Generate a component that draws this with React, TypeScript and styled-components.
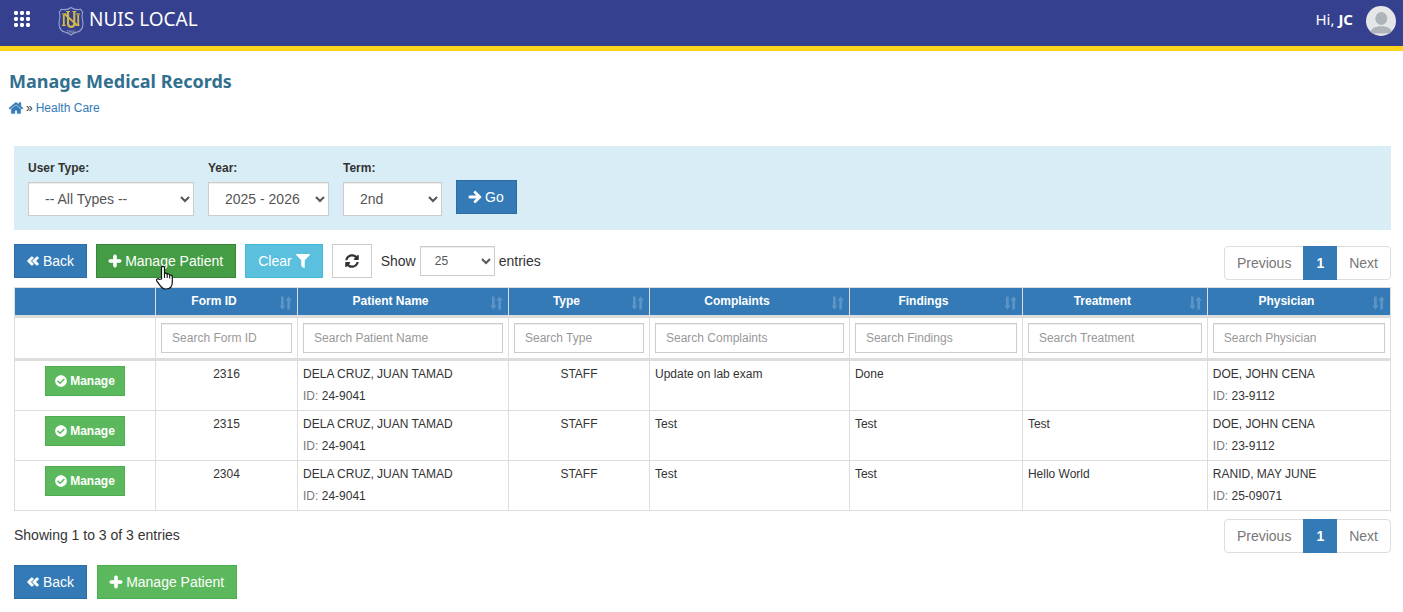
import React from "react";
import styled, { createGlobalStyle, css } from "styled-components";
import {
  FaAngleDoubleLeft,
  FaArrowRight,
  FaCheckCircle,
  FaFilter,
  FaHome,
  FaPlus,
  FaSyncAlt,
} from "react-icons/fa";

const GlobalStyle = createGlobalStyle`
  *, *::before, *::after { box-sizing: border-box; }
  body {
    margin: 0;
    background: #fff;
    color: #333;
    font-family: "Liberation Sans", Arial, sans-serif;
    font-size: 14px;
    line-height: 20px;
  }
  button, input, select { font-family: inherit; margin: 0; }
  a { text-decoration: none; }
`;

const displayFont = `"Noto Sans", "Open Sans", sans-serif`;

const TopBar = styled.header`
  display: flex;
  align-items: center;
  height: 51px;
  padding: 0 7px 4px 14px;
  background: #35408e;
  border-bottom: 5px solid #ffd41c;
  color: #fff;
  font-family: ${displayFont};
`;

const MenuButton = styled.button`
  display: flex;
  padding: 0 0 4px;
  border: 0;
  background: none;
  color: #fff;
  cursor: pointer;
`;

const BarText = styled.span`
  padding-bottom: 4px;
`;

const Brand = styled.a`
  display: flex;
  align-items: center;
  gap: 5px;
  margin-left: 28px;
  color: #fff;
  font-size: 19px;
  line-height: 24px;
`;

const UserLink = styled.a`
  display: flex;
  align-items: center;
  gap: 13px;
  margin-left: auto;
  color: #fff;
  font-size: 15px;
  line-height: 20px;
`;

const Main = styled.main`
  padding: 17px 12px 13px 14px;
`;

const PageHead = styled.div`
  margin: 0 0 26px -5px;
`;

const PageTitle = styled.h1`
  margin: 0;
  color: #31708f;
  font-family: ${displayFont};
  font-size: 18px;
  font-weight: 700;
  line-height: 26px;
`;

const Breadcrumb = styled.nav`
  display: flex;
  align-items: center;
  gap: 3px;
  height: 24px;
  margin-top: 2px;
  font-size: 12px;
  a { display: flex; color: #337ab7; }
  svg { overflow: visible; stroke-width: 20px; }
`;

const FilterPanel = styled.form`
  display: flex;
  align-items: flex-end;
  gap: 14px;
  padding: 14px;
  background: #d9edf7;
`;

const Field = styled.div<{ $width: number }>`
  display: flex;
  flex-direction: column;
  gap: 6px;
  width: ${(p) => p.$width}px;
  label { font-size: 12px; font-weight: 700; line-height: 16px; }
`;

const Select = styled.select<{ $small?: boolean }>`
  width: 100%;
  height: ${(p) => (p.$small ? 30 : 34)}px;
  padding: ${(p) => (p.$small ? "5px 10px" : "6px 12px")};
  border: 1px solid #ccc;
  border-radius: 0;
  background: #fff;
  box-shadow: inset 0 1px 1px rgba(0, 0, 0, 0.075);
  color: #555;
  font-size: ${(p) => (p.$small ? 12 : 14)}px;
`;

type Tone = "primary" | "success" | "successActive" | "info" | "plain";

const tones: Record<Tone, [string, string, string]> = {
  primary: ["#337ab7", "#2e6da4", "#fff"],
  success: ["#5cb85c", "#4cae4c", "#fff"],
  successActive: ["#449d44", "#398439", "#fff"],
  info: ["#5bc0de", "#46b8da", "#fff"],
  plain: ["#fff", "#ccc", "#333"],
};

const Button = styled.button<{ $tone: Tone; $small?: boolean }>`
  position: relative;
  display: inline-flex;
  align-items: center;
  justify-content: center;
  gap: 4px;
  height: 34px;
  padding: 0 12px;
  border: 1px solid ${(p) => tones[p.$tone][1]};
  background: ${(p) => tones[p.$tone][0]};
  color: ${(p) => tones[p.$tone][2]};
  font-size: 14px;
  line-height: 20px;
  white-space: nowrap;
  cursor: pointer;
  ${(p) =>
    p.$small &&
    css`
      gap: 3px;
      height: 30px;
      padding: 0 9px;
      font-size: 12px;
      font-weight: 700;
    `}
`;

const BoldGlyph = styled.span`
  display: flex;
  width: 12px;
  svg {
    flex: none;
    width: 12px;
    height: 14px;
    overflow: visible;
    stroke-width: 36px;
  }
`;

const GoSlot = styled.div`
  padding-bottom: 2px;
`;

const Pointer = styled.svg`
  position: absolute;
  left: 58px;
  top: 20px;
  z-index: 1;
`;

const Toolbar = styled.div`
  display: flex;
  align-items: flex-start;
  gap: 9px;
  margin: 14px 0 7px;
`;

const LengthControl = styled.label`
  display: flex;
  align-items: center;
  gap: 4px;
  height: 34px;
`;

const LengthSelect = styled.span`
  width: 75px;
`;

const Pager = styled.nav`
  display: flex;
  margin-left: auto;
  border: 1px solid #ddd;
  border-radius: 4px;
`;

const PagerSlot = styled.div`
  margin-left: auto;
  padding-top: 2px;
`;

const PageLink = styled.a<{ $current?: boolean }>`
  padding: 6px 12px;
  color: #777;
  ${(p) =>
    p.$current &&
    css`
      margin: -1px 0;
      padding: 7px 13px;
      background: #337ab7;
      color: #fff;
    `}
`;

const Table = styled.table`
  width: 100%;
  table-layout: fixed;
  border-collapse: separate;
  border-spacing: 0;
  border-top: 1px solid #ddd;
  border-left: 1px solid #ddd;
  font-size: 12px;
  line-height: 17px;
`;

const Col = styled.col<{ $share: number }>`
  width: ${(p) => p.$share}%;
`;

const HeadCell = styled.th`
  height: 30px;
  padding: 0 5px;
  border-right: 1px solid #ddd;
  border-bottom: 3px solid #ddd;
  background: #337ab7;
  color: #fff;
`;

const HeadContent = styled.div`
  display: flex;
  align-items: center;
  gap: 12px;
  span { flex: 1; padding-bottom: 1px; }
  svg { flex: none; margin-top: 2px; }
`;

const SearchCell = styled.td`
  padding: 5px;
  border-right: 1px solid #ddd;
  border-bottom: 3px solid #ddd;
`;

const SearchInput = styled.input`
  display: block;
  width: 100%;
  height: 30px;
  padding: 5px 10px;
  border: 1px solid #ccc;
  border-radius: 0;
  box-shadow: inset 0 1px 1px rgba(0, 0, 0, 0.075);
  color: #555;
  font-size: 12px;
  &::placeholder { color: #999; opacity: 1; }
`;

const Cell = styled.td<{ $center?: boolean }>`
  padding: 5px;
  border-right: 1px solid #ddd;
  border-bottom: 1px solid #ddd;
  vertical-align: top;
  text-align: ${(p) => (p.$center ? "center" : "left")};
`;

const Person = styled.div`
  display: flex;
  flex-direction: column;
  gap: 5px;
  small { color: #777; font-size: 12px; }
`;

const TableFoot = styled.div`
  display: flex;
  align-items: flex-start;
  margin-top: 8px;
  p { margin: 6px 0 0; }
`;

const BottomActions = styled.div`
  display: flex;
  gap: 10px;
  margin-top: 12px;
`;

const GridIcon = () => (
  <svg width="16" height="16" viewBox="0 0 16 16" fill="currentColor" aria-hidden="true">
    {[2, 8, 14].flatMap((y) =>
      [2, 8, 14].map((x) => (
        <rect key={`${x}-${y}`} x={x - 2} y={y - 2} width="4" height="4" rx="1.4" />
      )),
    )}
  </svg>
);

const Crest = () => (
  <svg width="26" height="30" viewBox="0 0 26 30" aria-hidden="true">
    <path
      d="M3.500 3.200C7 4 10.500 3.500 13 1.500c2.500 2 6 2.500 9.500 1.700L24.700 6c-1 3-.7 6 0 9 .8 4.500.3 7-2.200 9.500-2.500 2-6.500 1.500-9.500 4.500-3-3-7-2.500-9.500-4.500C1 22 .5 19.500 1.300 15c.7-3 1-6 0-9z"
      fill="#35408e"
      stroke="#98a5cc"
      strokeWidth="1.100"
    />
    <g fill="none" stroke="#d3b94a">
      <path d="M5.800 8.500V19M20.200 8.500V19" strokeWidth="1.800" />
      <path d="M4 8H8.500M17.800 8H22M4 19.300H7.800M17.500 19.300H21.500" strokeWidth="1.200" />
      <path d="M6.500 8L19.500 19.500" strokeWidth="1.700" />
      <path d="M10 6v11.500c0 4.500 6.300 4.500 6.300 0V6" strokeWidth="2.100" />
      <path d="M8 5.500h4M14.300 5.500h4" strokeWidth="1.200" />
    </g>
    <text x="13" y="26.500" fontSize="4" fill="#b9c0cf" textAnchor="middle" fontFamily="Liberation Sans, sans-serif">1900</text>
  </svg>
);

const Avatar = () => (
  <svg width="30" height="30" viewBox="0 0 30 30" aria-hidden="true">
    <defs>
      <clipPath id="avatarClip">
        <circle cx="15" cy="15" r="15" />
      </clipPath>
    </defs>
    <g clipPath="url(#avatarClip)">
      <rect width="30" height="30" fill="#e4e6e7" />
      <ellipse cx="15.300" cy="12.500" rx="6" ry="6.500" fill="#aeb4b7" />
      <path d="M4 27.500c.8-5 5-7.300 11.300-7.300s10.300 2.300 11 7.300z" fill="#aeb4b7" />
    </g>
  </svg>
);

const SortIcon = () => (
  <svg width="13" height="14" viewBox="0 0 13 14" fill="#fff" opacity="0.2" aria-hidden="true">
    <path d="M2 .5h2.700v9h2L3.400 13.500 0 9.500h2zM8.300 13.500v-9h-2L9.600.500 13 4.500h-2v9z" />
  </svg>
);

const HandPointer = () => (
  <Pointer width="20" height="26" viewBox="0 0 20 26" aria-hidden="true">
    <path
      d="M6.500 14V3c0-2.200 3-2.200 3 0v6c.3-1.300 2.700-1 2.700.5.400-1 2.500-.7 2.500 1 .5-.9 2.600-.5 2.600 1.300v5.500c0 4-2.300 6.700-6.300 6.700-3 0-4.500-1.500-6-3.700L1.700 15.800c-.8-1.700 1.300-2.700 2.500-1.500z"
      fill="#fff"
      stroke="#111"
      strokeWidth="1.200"
      strokeLinejoin="round"
    />
    <path d="M9.500 9v4M12.200 9.800V13M14.700 10.800V13.500" stroke="#111" strokeWidth="1.100" fill="none" />
  </Pointer>
);

const Pagination = ({ label }: { label: string }) => (
  <Pager aria-label={label}>
    <PageLink href="#previous">Previous</PageLink>
    <PageLink href="#1" $current aria-current="page"><b>1</b></PageLink>
    <PageLink href="#next">Next</PageLink>
  </Pager>
);

const PersonInfo = ({ name, id }: { name: string; id: string }) => (
  <Person>
    <span>{name}</span>
    <span><small>ID:</small> {id}</span>
  </Person>
);

const BackButton = () => (
  <Button type="button" $tone="primary">
    <BoldGlyph><FaAngleDoubleLeft /></BoldGlyph>Back
  </Button>
);

const columns = ["Form ID", "Patient Name", "Type", "Complaints", "Findings", "Treatment", "Physician"];
const shares = [10.25, 10.32, 15.33, 10.25, 14.53, 12.57, 13.44, 13.31];

const records = [
  { form: "2316", complaints: "Update on lab exam", findings: "Done", treatment: "", physician: "DOE, JOHN CENA", physicianId: "23-9112" },
  { form: "2315", complaints: "Test", findings: "Test", treatment: "Test", physician: "DOE, JOHN CENA", physicianId: "23-9112" },
  { form: "2304", complaints: "Test", findings: "Test", treatment: "Hello World", physician: "RANID, MAY JUNE", physicianId: "25-09071" },
];

export default function App() {
  return (
    <>
      <GlobalStyle />
      <TopBar>
        <MenuButton type="button" aria-label="Menu"><GridIcon /></MenuButton>
        <Brand href="#home"><Crest /><BarText>NUIS LOCAL</BarText></Brand>
        <UserLink href="#profile">
          <BarText>Hi, <b>JC</b></BarText>
          <Avatar />
        </UserLink>
      </TopBar>
      <Main>
        <PageHead>
          <PageTitle>Manage Medical Records</PageTitle>
          <Breadcrumb aria-label="Breadcrumb">
            <a href="#home" aria-label="Home"><FaHome size={14} /></a>
            <span>»</span>
            <a href="#health-care">Health Care</a>
          </Breadcrumb>
        </PageHead>

        <FilterPanel onSubmit={(e) => e.preventDefault()}>
          <Field $width={166}>
            <label htmlFor="userType">User Type:</label>
            <Select id="userType"><option>-- All Types --</option></Select>
          </Field>
          <Field $width={121}>
            <label htmlFor="year">Year:</label>
            <Select id="year"><option>2025 - 2026</option></Select>
          </Field>
          <Field $width={99}>
            <label htmlFor="term">Term:</label>
            <Select id="term"><option>2nd</option></Select>
          </Field>
          <GoSlot>
            <Button type="submit" $tone="primary">
              <BoldGlyph><FaArrowRight /></BoldGlyph>Go
            </Button>
          </GoSlot>
        </FilterPanel>

        <Toolbar>
          <BackButton />
          <Button type="button" $tone="successActive">
            <BoldGlyph><FaPlus /></BoldGlyph>Manage Patient
            <HandPointer />
          </Button>
          <Button type="button" $tone="info">Clear<FaFilter size={14} /></Button>
          <Button type="button" $tone="plain" aria-label="Refresh"><FaSyncAlt size={14} /></Button>
          <LengthControl>
            Show
            <LengthSelect>
              <Select $small defaultValue="25" aria-label="Entries per page"><option>25</option></Select>
            </LengthSelect>
            entries
          </LengthControl>
          <PagerSlot><Pagination label="Pages, top" /></PagerSlot>
        </Toolbar>

        <Table>
          <colgroup>
            {shares.map((share, i) => <Col key={i} $share={share} />)}
          </colgroup>
          <thead>
            <tr>
              <HeadCell />
              {columns.map((name) => (
                <HeadCell key={name} scope="col">
                  <HeadContent><span>{name}</span><SortIcon /></HeadContent>
                </HeadCell>
              ))}
            </tr>
            <tr>
              <SearchCell />
              {columns.map((name) => (
                <SearchCell key={name}>
                  <SearchInput type="text" aria-label={`Search ${name}`} placeholder={`Search ${name}`} />
                </SearchCell>
              ))}
            </tr>
          </thead>
          <tbody>
            {records.map((r) => (
              <tr key={r.form}>
                <Cell $center>
                  <Button type="button" $tone="success" $small><FaCheckCircle size={12} />Manage</Button>
                </Cell>
                <Cell $center>{r.form}</Cell>
                <Cell><PersonInfo name="DELA CRUZ, JUAN TAMAD" id="24-9041" /></Cell>
                <Cell $center>STAFF</Cell>
                <Cell>{r.complaints}</Cell>
                <Cell>{r.findings}</Cell>
                <Cell>{r.treatment}</Cell>
                <Cell><PersonInfo name={r.physician} id={r.physicianId} /></Cell>
              </tr>
            ))}
          </tbody>
        </Table>

        <TableFoot>
          <p>Showing 1 to 3 of 3 entries</p>
          <Pagination label="Pages, bottom" />
        </TableFoot>

        <BottomActions>
          <BackButton />
          <Button type="button" $tone="success">
            <BoldGlyph><FaPlus /></BoldGlyph>Manage Patient
          </Button>
        </BottomActions>
      </Main>
    </>
  );
}
